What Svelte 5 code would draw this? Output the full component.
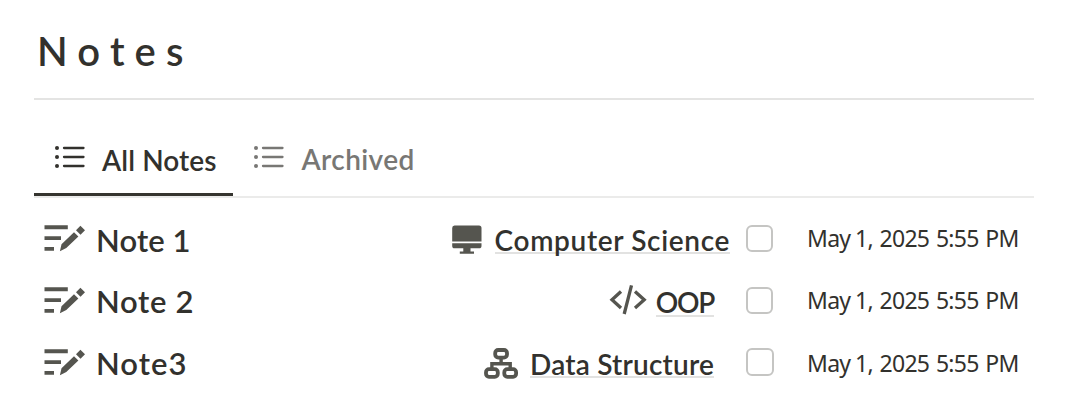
<script>
  const notes = [
    { title: 'Note 1', spacing: 0.1, topic: 'Computer Science', kind: 'monitor' },
    { title: 'Note 2', spacing: 0.7, topic: 'OOP', kind: 'code' },
    { title: 'Note3', spacing: 1, topic: 'Data Structure', kind: 'tree' }
  ];
</script>

{#snippet listIcon()}
  <svg class="list-icon" width="30" height="24" viewBox="0 0 30 24" aria-hidden="true">
    <g fill="currentColor"><circle cx="2" cy="3" r="2" /><circle cx="2" cy="12" r="2" /><circle cx="2" cy="21" r="2" /></g>
    <path d="M9 3H28.5M9 12H28.5M9 21H28.5" stroke="currentColor" stroke-width="2.3" stroke-linecap="round" />
  </svg>
{/snippet}

<main>
  <h1>Notes</h1>
  <nav>
    <button class="tab active">{@render listIcon()}<span>All Notes</span></button>
    <button class="tab archived">{@render listIcon()}<span>Archived</span></button>
  </nav>
  <ul>
    {#each notes as note}
      <li>
        <svg class="note-icon" width="42" height="28" viewBox="0 0 42 28" aria-hidden="true">
          <path d="M.5 .2H23.8V4.2H.5zM.5 11.2H17V15H.5zM.5 22H10V25.8H.5z" />
          <path d="M30 7.2L34.4 11.6L22.3 23.1L15.9 26.2L17.5 19.3zM32 5.2L36.4 .7L41 5.2L36.5 9.7z" />
        </svg>
        <span class="title" style:letter-spacing="{note.spacing}px">{note.title}</span>
        <div class="topic {note.kind}">
          {#if note.kind === 'monitor'}
            <svg width="30" height="30" viewBox="0 0 30 30" aria-hidden="true">
              <path d="M2.5 .5H27Q29.5 .5 29.5 3V16.5H.2V3Q.2 .5 2.5 .5zM.2 18.3H29.5V20.7Q29.5 23.3 27 23.3H18.5V26.6H22V28.7H7.8V26.6H11.3V23.3H2.5Q.2 23.3 .2 20.7z" />
            </svg>
          {:else if note.kind === 'code'}
            <svg width="38" height="30" viewBox="0 0 38 30" aria-hidden="true">
              <path d="M12 6.5L3 14.8L12 23M26 6.5L35.2 14.8L26 23M22.5 .4L15.2 29" fill="none" stroke="#55554f" stroke-width="3.3" />
            </svg>
          {:else}
            <svg width="34" height="32" viewBox="0 0 34 32" aria-hidden="true">
              <g fill="none" stroke="#55554f" stroke-width="3.8">
                <rect x="11.2" y="2" width="11.8" height="7.6" rx="3" />
                <rect x="2" y="21.2" width="11.8" height="7.6" rx="3" />
                <rect x="20.3" y="21.2" width="11.8" height="7.6" rx="3" />
                <path d="M17.1 10V15.8M7.9 21V15.8H26.2V21" stroke-width="3.4" />
              </g>
            </svg>
          {/if}
          <a href="#topic">{note.topic}</a>
        </div>
        <input type="checkbox" aria-label={note.title} />
        <time>May <span class="day">1,</span> 2025 5:55 PM</time>
      </li>
    {/each}
  </ul>
</main>

<style>
  :global(body) { margin: 0; background: #fff; }
  main {
    box-sizing: border-box;
    width: 1069px;
    height: 404px;
    padding: 0 35px 0 34px;
    overflow: hidden;
    font-family: Lato, sans-serif;
    font-weight: 600;
    color: #32312d;
    background: #fff;
  }
  h1 {
    box-sizing: border-box;
    height: 100px;
    margin: 0;
    padding: 27px 0 0 3px;
    border-bottom: 2px solid #e4e4e3;
    font-size: 40px;
    line-height: 48px;
    font-weight: 600;
    letter-spacing: 10.2px;
  }
  nav {
    display: flex;
    box-sizing: border-box;
    height: 98px;
    border-bottom: 2px solid #ebebea;
  }
  .tab {
    display: flex;
    box-sizing: border-box;
    height: 96px;
    padding: 43px 0 0 21px;
    border: 0;
    border-bottom: 3px solid transparent;
    background: none;
    color: #787774;
    font: 600 28px/34px Lato, sans-serif;
    letter-spacing: .1px;
    text-align: left;
    white-space: nowrap;
  }
  .active { width: 198.5px; border-bottom-color: #35342f; color: #32312d; }
  .archived { letter-spacing: .4px; }
  .list-icon { flex: none; margin: 2px 17px 0 0; }
  .archived .list-icon { margin-right: 18px; }
  .archived span { margin-top: -1px; }
  ul { margin: 0; padding: 10px 0 0; list-style: none; }
  li {
    display: grid;
    grid-template-columns: 62px 250px 384px 77px 1fr;
    height: 62px;
  }
  .note-icon { margin: 17px 0 0 10px; fill: #55554f; }
  .title { padding-top: 13px; font-size: 31px; line-height: 38px; }
  li:nth-child(n + 2) .title { padding-top: 12px; }
  .topic {
    display: flex;
    justify-content: flex-end;
    align-items: flex-start;
    padding-top: 16px;
    fill: #55554f;
  }
  .code, .tree { padding-right: 16px; }
  .topic svg { flex: none; margin: 1px 13px 0 0; }
  .code svg { margin: -1px 9px 0 0; }
  .tree svg { margin: 0 12px 0 0; }
  a {
    height: 28px;
    border-bottom: 2px solid #e2e2e1;
    color: inherit;
    font-size: 28px;
    line-height: 32px;
    letter-spacing: .65px;
    text-decoration: none;
    white-space: nowrap;
  }
  .code a { height: 29px; letter-spacing: -1.3px; }
  .tree a { letter-spacing: .2px; }
  input {
    appearance: none;
    box-sizing: border-box;
    width: 27px;
    height: 27px;
    margin: 17px 0 0 16px;
    border: 2px solid #c5c5c3;
    border-radius: 6px;
    background: #fff;
  }
  li:last-child input { width: 28px; height: 28px; margin-top: 16px; }
  time {
    padding-top: 14px;
    font: 400 23px/32px "Noto Sans", sans-serif;
    letter-spacing: -.7px;
    word-spacing: 1.3px;
    white-space: nowrap;
  }
  li:last-child time { padding-top: 15px; }
  .day { margin: 0 0 0 -2px; }
</style>
